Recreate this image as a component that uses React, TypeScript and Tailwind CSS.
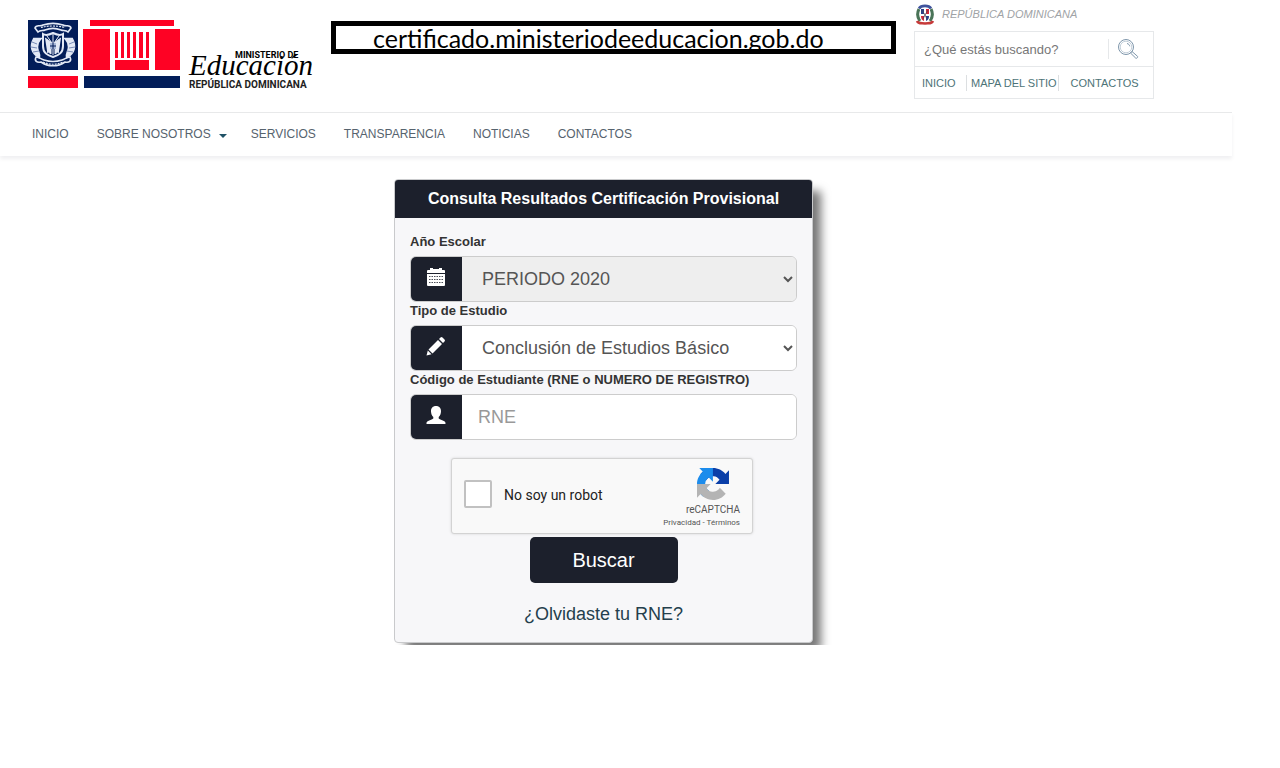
import type { ReactNode } from 'react'

const NAV_LINKS = ['INICIO', 'SOBRE NOSOTROS', 'SERVICIOS', 'TRANSPARENCIA', 'NOTICIAS', 'CONTACTOS']

const MinistryLogo = () => {
  return (
    <svg width="152" height="69" viewBox="0 0 152 69" aria-hidden="true">
      <path fill="#021d59" d="M0 0h50v50H0zM56 56h96v12H56z" />
      <path
        fill="#fe0224"
        d="M0 56h50v12H0zM62 0h84v6H62zM55 9h27v41H55zM127 9h25v41h-25zM87 40h34v10H87zM87 12h3v26h-3zM93 12h3v26h-3zM99 12h3v26h-3zM105 12h3v26h-3zM111 12h4v26h-4zM118 12h3v26h-3z"
      />
      <g fill="none" stroke="#e3e9f5">
        <path d="M6 19c-4 7-2 14 5 18 1-3-2-6-2-10 0-3 1-6 3-8zM44 19c4 7 2 14-5 18-1-3 2-6 2-10 0-3-1-6-3-8z" fill="#e3e9f5" strokeWidth="2.500" />
        <path d="M4 22l5 2M3 27l6 1M5 32l6-1M46 22l-5 2M47 27l-6 1M45 32l-6-1" stroke="#5d74a6" strokeWidth="0.8" />
        <path d="M7 8c1-4 5-1 8-3 6-2 14-2 20 0 3 2 7-1 8 3l-3 4c-2-2-5-1-7-2-5-2-11-2-16 0-2 1-5 0-7 2z" strokeWidth="1.600" />
        <path d="M13 7.500c7-2 17-2 24 0" strokeWidth="1.200" strokeDasharray="2 1" />
        <path d="M8 37c-2 4 1 6 5 5 7 5 17 5 24 0 4 1 7-1 5-5-3 0-5 2-8 3-6 2-12 2-18 0-3-1-5-3-8-3z" strokeWidth="1.600" />
        <path d="M15 42c7 3 13 3 20 0" strokeWidth="1.200" strokeDasharray="2 1" />
        <path d="M15 14c3 2 6 1 10-1 4 2 7 3 10 1v12c0 7-4 9-10 11-6-2-10-4-10-11z" strokeWidth="2" />
        <path d="M17 18l6 4v12l-4-3M33 18l-6 4v12l4-3" fill="#e3e9f5" strokeWidth="1" />
        <path d="M25 13v22M19 16l12 17M31 16L19 33" strokeWidth="1" />
      </g>
      <path fill="#a9b9d8" d="M22 23h6v6h-6z" />
      <path d="M25 23v6M22 26h6" stroke="#021d59" strokeWidth="1" />
    </svg>
  )
}

const Wordmark = () => {
  return (
    <svg width="132" height="48" viewBox="0 0 132 48" role="img" aria-label="Ministerio de Educación">
      <text x="47" y="14" fontFamily="Roboto, sans-serif" fontSize="9" fontWeight="700">MINISTERIO DE</text>
      <text x="1" y="31" fontFamily="'Liberation Serif', serif" fontSize="29" fontStyle="italic">Educación</text>
      <text x="1" y="44" fontFamily="Roboto, sans-serif" fontSize="10" fontWeight="700" fill="#222">REPÚBLICA DOMINICANA</text>
    </svg>
  )
}

const CoatOfArms = () => {
  return (
    <svg width="20" height="22" viewBox="0 0 20 22" aria-hidden="true">
      <path d="M4 5C2 9 2 13 5 17M16 5c2 4 2 8-1 12" fill="none" stroke="#4a7458" strokeWidth="3" />
      <path d="M4 4.500C6 1 14 1 16 4.500" fill="none" stroke="#3f539c" strokeWidth="2.600" />
      <path d="M5 5h10v8c0 3-3 4-5 5-2-1-5-2-5-5z" fill="#fff" />
      <path d="M6 5h3v5H6zM11 12h3c0 3-1 4-3 5z" fill="#27408b" />
      <path d="M11 5h3v5h-3zM6 12h3v5c-2-1-3-2-3-5z" fill="#d2283c" />
      <path d="M7 6l3 5 3-5M8 15l2-4 2 4" fill="none" stroke="#4a4a5c" strokeWidth="0.800" />
      <path d="M2 17c1 3 4 2 8 2.500 4-.5 7 .5 8-2.500" fill="none" stroke="#c63a3a" strokeWidth="2.400" />
    </svg>
  )
}

const SearchIcon = () => {
  return (
    <svg width="22" height="22" viewBox="0 0 22 22" fill="none" stroke="#7e96ab" aria-hidden="true">
      <circle cx="9" cy="9" r="7.500" />
      <circle cx="9" cy="9" r="5.800" stroke="#b4c3d0" strokeWidth="0.800" />
      <path d="M10 5.500c1.500.3 2.500 1.300 2.800 2.800" />
      <path d="M13.500 15l1.500-1.500 5.500 4.800c.8.8-.9 2.600-1.800 1.800z" />
    </svg>
  )
}

const CalendarIcon = () => {
  return (
    <svg width="18" height="18" viewBox="0 0 18 18" fill="#fff" aria-hidden="true">
      <path d="M0 5V3q0-1 1-1h2V0h3v1h6V0h3v2h2q1 0 1 1v2z" />
      <path d="M0 6h18v11q0 1-1 1H1q-1 0-1-1z" />
      <path d="M2 8.500h14M2 11.500h14M2 14.500h14" stroke="#1c202c" strokeWidth="0.800" strokeDasharray="1.500 1" />
    </svg>
  )
}

const PencilIcon = () => {
  return (
    <svg width="20" height="20" viewBox="0 0 20 20" fill="#fff" aria-hidden="true">
      <path d="M14.500 1.500q1-1 2 0l2 2q1 1 0 2L17 7l-4-4zM12 4l4 4-9.500 9.500-4-4zM1.800 14.500l3.700 3.700L.500 19.500z" />
    </svg>
  )
}

const UserIcon = () => {
  return (
    <svg width="20" height="18" viewBox="0 0 20 18" fill="#fff" aria-hidden="true">
      <path d="M10 0c3.300 0 5 2.200 5 5.200 0 2.500-1 4.600-2.300 5.800v1.600c1 .9 4.600 1.900 6 2.900.8.6.8 1.500.8 2.500H.500c0-1 0-1.900.8-2.500 1.400-1 5-2 6-2.900V11C6 9.800 5 7.700 5 5.200 5 2.200 6.700 0 10 0z" />
    </svg>
  )
}

const RecaptchaIcon = () => {
  return (
    <svg width="32" height="32" viewBox="0 0 64 64" aria-hidden="true">
      <path fill="#0b3fa8" d="M64 31.955l-.033-1.37V4.687l-7.16 7.16C50.948 4.674 42.033.093 32.05.093c-10.4 0-19.622 4.96-25.458 12.64l11.736 11.86a15.55 15.55 0 0 1 4.754-5.334c2.05-1.6 4.952-2.906 8.968-2.906.485 0 .86.057 1.135.163 4.976.393 9.288 3.14 11.828 7.124l-8.307 8.307L64 31.953" />
      <path fill="#1c8cec" d="M31.862.094l-1.37.033H4.594l7.16 7.16C4.58 13.147 0 22.06 0 32.046c0 10.4 4.96 19.622 12.64 25.458L24.5 45.768a15.55 15.55 0 0 1-5.334-4.754c-1.6-2.05-2.906-4.952-2.906-8.968 0-.485.057-.86.163-1.135.393-4.976 3.14-9.288 7.124-11.828l8.307 8.307L31.86.095" />
      <path fill="#b4b4b4" d="M.001 32.045l.033 1.37v25.898l7.16-7.16c5.86 7.173 14.774 11.754 24.76 11.754 10.4 0 19.622-4.96 25.458-12.64l-11.736-11.86a15.55 15.55 0 0 1-4.754 5.334c-2.05 1.6-4.952 2.906-8.968 2.906-.485 0-.86-.057-1.135-.163-4.976-.393-9.288-3.14-11.828-7.124l8.307-8.307c-10.522.04-22.4.066-27.295-.005" />
    </svg>
  )
}

const Field = ({ id, label, icon, children }: { id: string; label: string; icon: ReactNode; children: ReactNode }) => {
  return (
    <div>
      <label htmlFor={id} className="mb-[5px] block text-[13px] leading-[18px] font-bold text-[#333]">
        {label}
      </label>
      <div className="flex h-[46px] overflow-hidden rounded-md border border-[#ccc]">
        <span className="flex w-[51px] shrink-0 items-center justify-center bg-[#1c202c] pr-px pb-1">{icon}</span>
        {children}
      </div>
    </div>
  )
}

const Header = () => {
  return (
    <header className="mr-12">
      <div className="flex h-28 items-start pl-7">
        <div className="flex shrink-0 pt-5">
          <MinistryLogo />
          <div className="ml-2 pt-6">
            <Wordmark />
          </div>
        </div>
        <div className="mt-[21px] ml-[11px] h-[33px] min-w-0 flex-1 overflow-hidden border-5 border-black pl-[37px] font-[Lato,sans-serif] text-[25px] leading-[24px] text-black">
          certificado.ministeriodeeducacion.gob.do
        </div>
        <div className="mr-[78px] ml-[18px] w-60 shrink-0 pt-1">
          <div className="flex h-[27px] items-start gap-[7px] pl-px text-[11px] leading-[20px] text-[#a0a3a6] italic">
            <CoatOfArms />
            REPÚBLICA DOMINICANA
          </div>
          <div className="border border-[#e6e8ea]">
            <form className="flex h-[35px] items-center border-b border-[#e6e8ea]">
              <input
                type="text"
                aria-label="Buscar en el sitio"
                placeholder="¿Qué estás buscando?"
                className="h-5 min-w-0 flex-1 border-r border-[#e6e8ea] pl-[9px] text-[13px] text-[#666] outline-none placeholder:text-[#777]"
              />
              <button type="button" aria-label="Buscar" className="pr-[14px] pl-2">
                <SearchIcon />
              </button>
            </form>
            <div className="flex h-[31px] items-center text-[11px] leading-[16px] text-[#4d7377]">
              <a href="#inicio" className="w-[52px] border-r border-[#dcdfe1] pl-[7px]">INICIO</a>
              <a href="#mapa" className="border-r border-[#dcdfe1] pr-px pl-1">MAPA DEL SITIO</a>
              <a href="#contactos" className="pl-3">CONTACTOS</a>
            </div>
          </div>
        </div>
      </div>
      <nav className="flex h-11 items-center gap-7 border-t border-[#e8e9ea] pl-8 text-[12px] text-[#56636e] shadow-[0_3px_4px_#f0f0f2]">
        {NAV_LINKS.map((link) => (
          <a key={link} href="#" className="flex items-center pb-px">
            {link}
            {link === 'SOBRE NOSOTROS' && (
              <span className="mt-1 -mr-1 ml-2 border-x-4 border-t-4 border-x-transparent border-t-[#1f5266]" />
            )}
          </a>
        ))}
      </nav>
    </header>
  )
}

const Captcha = () => {
  return (
    <div className="mt-[18px] mr-11 ml-auto flex h-[76px] w-[302px] items-center rounded-[3px] border border-[#d3d3d3] bg-[#f9f9f9] pr-3 pl-3 font-[Roboto,sans-serif] shadow-[0_0_3px_#0002]">
      <input id="robot" type="checkbox" className="mb-1 size-7 shrink-0 appearance-none rounded-xs border-2 border-[#c1c1c1] bg-white" />
      <label htmlFor="robot" className="ml-3 flex-1 pb-0.5 text-[14px] text-[#222]">No soy un robot</label>
      <div className="flex flex-col items-end pt-1 text-[#555]">
        <div className="pr-[11px]">
          <RecaptchaIcon />
        </div>
        <span className="mt-0.5 text-[10px] leading-[16px]">reCAPTCHA</span>
        <span className="text-[8px] leading-[10px]">
          <a href="#privacidad">Privacidad</a> - <a href="#terminos">Términos</a>
        </span>
      </div>
    </div>
  )
}

const App = () => {
  return (
    <div className="min-h-screen bg-white font-['Liberation_Sans',Arial,sans-serif]">
      <Header />
      {/* the card's shadow is cut off just under its bottom edge */}
      <main className="mr-[73px] flex justify-center overflow-hidden pt-[23px] pb-[2px]">
        <form className="w-[419px] rounded border border-[#c9cacc] bg-[#f7f7f9] shadow-[10px_10px_10px_-2px_#777]">
          <h1 className="rounded-t-[3px] bg-[#1c202c] text-center text-[16px] leading-[38px] font-bold text-white">
            Consulta Resultados Certificación Provisional
          </h1>
          <div className="px-[15px] pt-[15px] pb-4">
            <Field id="periodo" label="Año Escolar" icon={<CalendarIcon />}>
              <select id="periodo" className="min-w-0 flex-1 bg-[#eee] px-4 text-[18px] text-[#555]">
                <option>PERIODO 2020</option>
              </select>
            </Field>
            <Field id="estudio" label="Tipo de Estudio" icon={<PencilIcon />}>
              <select id="estudio" className="min-w-0 flex-1 bg-white px-4 text-[18px] text-[#555]">
                <option>Conclusión de Estudios Básico</option>
              </select>
            </Field>
            <Field id="rne" label="Código de Estudiante (RNE o NUMERO DE REGISTRO)" icon={<UserIcon />}>
              <input id="rne" type="text" placeholder="RNE" className="min-w-0 flex-1 bg-white px-4 text-[18px] text-[#555] placeholder:text-[#999]" />
            </Field>
            <Captcha />
            <button type="button" className="mx-auto mt-[3px] block h-[46px] w-[148px] rounded-[5px] bg-[#1c202c] text-[20px] text-white">
              Buscar
            </button>
            <a href="#olvido" className="mx-auto mt-[19px] block w-fit text-[18px] leading-6 text-[#243f4d]">
              ¿Olvidaste tu RNE?
            </a>
          </div>
        </form>
      </main>
    </div>
  )
}

export default App
